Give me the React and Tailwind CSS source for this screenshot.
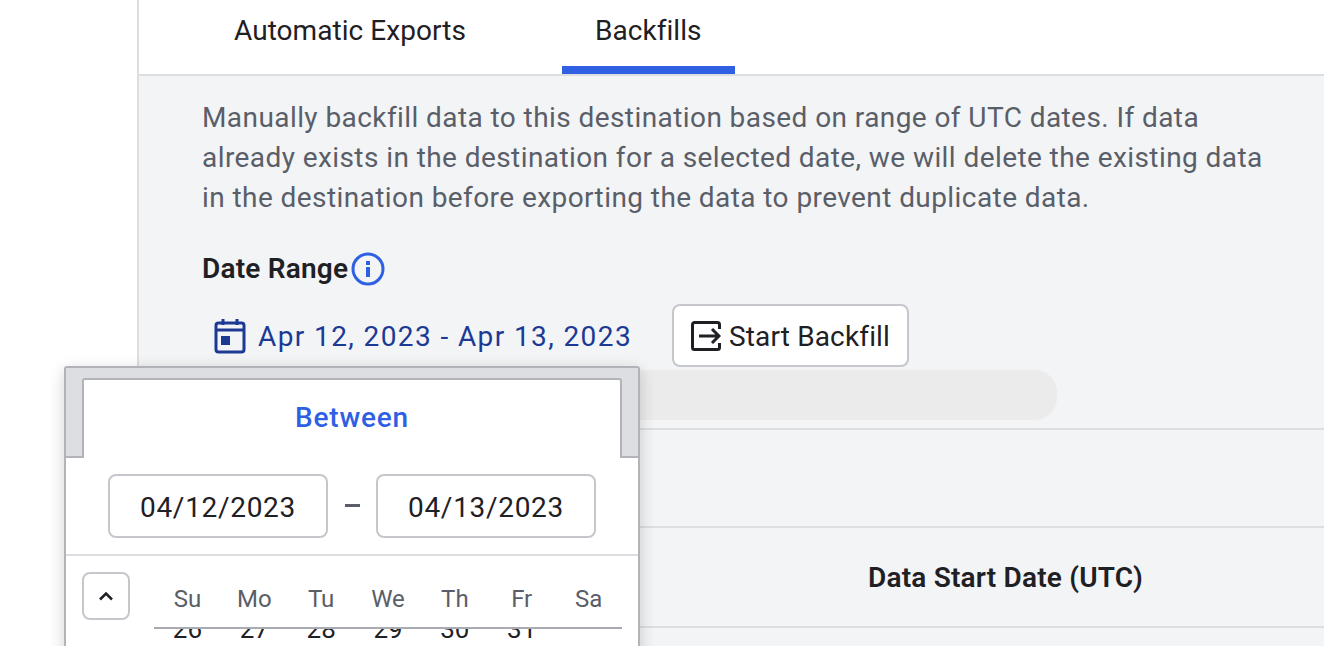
import React from "react";

const CalendarIcon = () => (
  <svg width="32" height="36" viewBox="0 0 32 36" fill="none" className="shrink-0">
    <path d="M9 1v6M23 1v6" stroke="#1c3a94" strokeWidth="3" />
    <rect x="2" y="5" width="28" height="29" rx="2.5" stroke="#1c3a94" strokeWidth="3" />
    <path d="M2 12h28" stroke="#1c3a94" strokeWidth="3" />
    <rect x="7" y="18" width="9" height="9" fill="#1c3a94" />
  </svg>
);

const ExportIcon = () => (
  <svg width="30" height="30" viewBox="0 0 30 30" fill="none" className="shrink-0">
    <path d="M28.500 8V3.500a2 2 0 0 0-2-2H3.500a2 2 0 0 0-2 2v23a2 2 0 0 0 2 2h23a2 2 0 0 0 2-2V22" stroke="#1f2024" strokeWidth="3" />
    <path d="M8 15h20M21 8l7 7-7 7" stroke="#1f2024" strokeWidth="3" />
  </svg>
);

const InfoIcon = () => (
  <svg width="34" height="34" viewBox="0 0 34 34" fill="none" className="shrink-0">
    <circle cx="17" cy="17" r="15" stroke="#2f5fe3" strokeWidth="3" />
    <rect x="15" y="15" width="4" height="10" fill="#2f5fe3" />
    <rect x="15" y="9" width="4" height="4" fill="#2f5fe3" />
  </svg>
);

const weekDays = ["Su", "Mo", "Tu", "We", "Th", "Fr", "Sa"];
const days = ["26", "27", "28", "29", "30", "31", ""];

const DatePopup = () => (
  <div className="absolute left-[64px] top-[366px] w-[576px] h-[300px] bg-white border-2 border-[#b1b3b9] rounded-t-[3px] shadow-[0_4px_16px_rgba(0,0,0,0.18)]">
    <div className="h-[90px] bg-[#dcdee2] border-b-2 border-[#b1b3b9] px-[16px] pt-[10px]">
      <div className="h-[80px] bg-white border-2 border-b-0 border-[#b1b3b9] rounded-t-[3px] flex items-center justify-center text-[28px] tracking-[0.8px] font-medium text-[#2f5fe3] pb-[2px]">
        Between
      </div>
    </div>
    <div className="h-[98px] border-b-2 border-[#dcdee2] flex items-center pl-[42px] pb-[1px]">
      <div className="w-[220px] h-[64px] border-2 border-[#c5c7cc] rounded-[8px] flex items-center justify-center text-[28px] tracking-[0.7px] pt-[4px] text-[#1f2024]">
        04/12/2023
      </div>
      <div className="w-[48px] flex justify-center">
        <div className="w-[15px] h-[3px] bg-[#5a5e68]" />
      </div>
      <div className="w-[220px] h-[64px] border-2 border-[#c5c7cc] rounded-[8px] flex items-center justify-center text-[28px] tracking-[0.7px] pt-[4px] text-[#1f2024]">
        04/13/2023
      </div>
    </div>
    <div className="flex pl-[16px] pt-[16px]">
      <button className="w-[48px] h-[48px] border-2 border-[#c5c7cc] rounded-[8px] bg-white flex items-center justify-center">
        <svg width="16" height="10" viewBox="0 0 16 10" fill="none">
          <path d="M2 8.500 8 2.500l6 6" stroke="#1f2024" strokeWidth="2.500" />
        </svg>
      </button>
      <div className="ml-[24px] w-[468px]">
        <div className="relative z-10 bg-white h-[57px] pt-[15px] border-b-2 border-[#a9abb2] grid grid-cols-7 text-center text-[24px] leading-[24px] text-[#5a5e68]">
          {weekDays.map((d) => (
            <div key={d}>{d}</div>
          ))}
        </div>
        <div className="-mt-[14px] h-[28px] grid grid-cols-7 text-center text-[26px] leading-[28px] text-[#1f2024]">
          {days.map((d, i) => (
            <div key={i}>{d}</div>
          ))}
        </div>
      </div>
    </div>
  </div>
);

export default function App() {
  return (
    <div className="relative h-[646px] w-[1324px] overflow-hidden bg-white flex text-[#1f2024] font-['Roboto',sans-serif]">
      <div className="w-[137px] shrink-0" />
      <div className="flex-1 border-l-2 border-[#dcdee2] bg-[#f3f4f6]">
        {/* Tabs */}
        <div className="h-[76px] bg-white border-b-2 border-[#dcdee2] flex pl-[62px] gap-[63px] text-[28px] tracking-[0.05px]">
          <div className="h-[74px] px-[33px] pt-[13px] leading-[36px]">Automatic Exports</div>
          <div className="h-[74px] px-[33px] pt-[13px] leading-[36px] border-b-[8px] border-[#2f5fe3]">Backfills</div>
        </div>

        {/* Backfill form */}
        <div className="pl-[63px] pt-[22px] h-[354px] border-b-2 border-[#dcdee2]">
          <p className="w-[1090px] text-[28px] tracking-[0.42px] leading-[40px] text-[#5a5e68]">
            Manually backfill data to this destination based on range of UTC dates. If data
            <br />
            already exists in the destination for a selected date, we will delete the existing data
            <br />
            in the destination before exporting the data to prevent duplicate data.
          </p>
          <div className="mt-[31px] h-[40px] flex items-center gap-[3px] text-[28px] tracking-[0.2px] font-semibold">
            Date Range
            <InfoIcon />
          </div>
          <div className="mt-[15px] h-[63px] flex items-center">
            <div className="ml-[12px] w-[458px] flex items-center gap-[12px] text-[28px] tracking-[1.4px] text-[#1c3a94]">
              <CalendarIcon />
              <span className="pt-[2px]">Apr 12, 2023 - Apr 13, 2023</span>
            </div>
            <button className="w-[237px] h-[63px] bg-white border-2 border-[#c5c7cc] rounded-[8px] flex items-center justify-center gap-[8px] text-[28px] tracking-[0.15px] text-[#1f2024]">
              <ExportIcon />
              <span className="pt-[2px]">Start Backfill</span>
            </button>
          </div>
          <div className="mt-[3px] w-[855px] h-[50px] rounded-[22px] bg-[#ebebeb]" />
        </div>

        {/* Table */}
        <div className="h-[98px] border-b-2 border-[#dcdee2]" />
        <div className="h-[100px] border-b-2 border-[#dcdee2] flex items-center pl-[729px] pt-[2px] text-[28px] tracking-[0.2px] font-semibold">
          Data Start Date (UTC)
        </div>
      </div>

      <DatePopup />
    </div>
  );
}
